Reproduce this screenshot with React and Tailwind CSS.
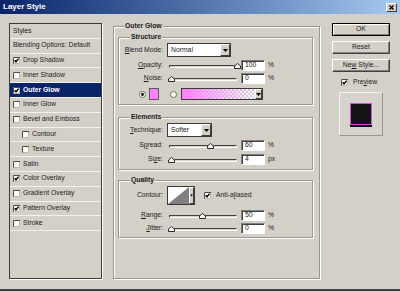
import React from "react";

function Check({ checked }) {
  return (
    <svg width="7" height="7" viewBox="0 0 7 7" className="shrink-0 block">
      <rect x="0" y="0" width="7" height="7" fill="#fff" />
      <path d="M0.5 7V0.5H7" stroke="#4a4a4a" fill="none" />
      <path d="M0.5 6.5H6.5V1" stroke="#b8b4ac" fill="none" />
      {checked && (
        <path d="M1.6 3.2L3 4.8L5.6 1.6" stroke="#000" strokeWidth="1.4" fill="none" />
      )}
    </svg>
  );
}

function Radio({ on }) {
  return (
    <svg width="7" height="7" viewBox="0 0 7 7" className="shrink-0 block">
      <circle cx="3.5" cy="3.5" r="3" fill="#fff" stroke="#6a6a6a" strokeWidth="1" />
      {on && <circle cx="3.5" cy="3.5" r="1.4" fill="#000" />}
    </svg>
  );
}

function Arrow() {
  return (
    <div className="flex items-center justify-center bg-[#d4d0c8] border border-t-white border-l-white border-r-[#404040] border-b-[#404040] h-full">
      <svg width="5" height="3" viewBox="0 0 5 3" className="block">
        <path d="M0 0H5L2.5 3Z" fill="#000" />
      </svg>
    </div>
  );
}

function Dropdown({ text, w }) {
  return (
    <div className={"flex h-[14px] bg-white border border-[#3a3a3a] " + w}>
      <div className="flex-1 flex items-center pl-[3px]">{text}</div>
      <div className="w-[10px]">
        <Arrow />
      </div>
    </div>
  );
}

function Slider({ v }) {
  return (
    <div className="relative w-[71px] h-[12px] shrink-0">
      <div className="absolute left-[2px] right-[1px] top-[6px] h-[3px] bg-[#d4d0c8] border border-t-[#404040] border-l-[#404040] border-b-white border-r-white" />
      <svg
        width="7"
        height="6"
        viewBox="0 0 7 6"
        className="absolute top-[4px] block"
        style={{ left: 0.5 + v * 0.66 + "px" }}
      >
        <path d="M0.5 5.5V3L3.5 0.5L6.5 3V5.5Z" fill="#f4f3f0" stroke="#2a2a2a" strokeWidth="1" />
      </svg>
    </div>
  );
}

function Input({ value }) {
  return (
    <div className="w-[24px] h-[11px] shrink-0 bg-white border border-t-[#808080] border-l-[#808080] border-b-white border-r-white shadow-[inset_1px_1px_0_#404040] pl-[3px] flex items-center">
      {value}
    </div>
  );
}

function SliderRow({ label, v, value, unit, mt }) {
  return (
    <div className={"flex items-center h-[12px] " + mt}>
      <div className="w-[44px] text-right shrink-0">{label}</div>
      <div className="ml-[4px]">
        <Slider v={v} />
      </div>
      <div className="ml-[3px]">
        <Input value={value} />
      </div>
      <span className="ml-[3px]">{unit}</span>
    </div>
  );
}

function GroupTitle({ children, ml }) {
  return (
    <div className={"-mt-[5px] h-[9px] flex items-center font-bold bg-[#d4d0c8] px-[1px] w-fit " + ml}>
      {children}
    </div>
  );
}

const etched =
  "border border-[#9a968e] shadow-[1px_1px_0_#ffffff,inset_1px_1px_0_#ffffff]";

function Button({ children, def, mt }) {
  return (
    <div
      className={
        "h-[13px] flex items-center justify-center bg-[#d4d0c8] " +
        (def
          ? "border border-black shadow-[inset_1px_1px_0_#ffffff,inset_-1px_-1px_0_#808080] "
          : "border border-t-white border-l-white border-r-[#404040] border-b-[#404040] shadow-[inset_-1px_-1px_0_#808080] ") +
        mt
      }
    >
      {children}
    </div>
  );
}

const items = [
  { t: "Styles", kind: "plain" },
  { t: "Blending Options: Default", kind: "plain" },
  { t: "Drop Shadow", c: true },
  { t: "Inner Shadow", c: false },
  { t: "Outer Glow", c: true, sel: true },
  { t: "Inner Glow", c: false },
  { t: "Bevel and Emboss", c: false },
  { t: "Contour", c: false, ind: true },
  { t: "Texture", c: false, ind: true },
  { t: "Satin", c: false },
  { t: "Color Overlay", c: true },
  { t: "Gradient Overlay", c: false },
  { t: "Pattern Overlay", c: true },
  { t: "Stroke", c: false },
];

export default function App() {
  return (
    <div className="w-[400px] h-[291px] bg-[#d4d0c8] flex flex-col border-b-2 border-[#404040] font-['Liberation_Sans',Arial,sans-serif] text-[6.8px] leading-none text-[#1a1a1a] overflow-hidden">
      {/* Title bar */}
      <div className="h-[14px] shrink-0 flex items-center pl-[3px] pr-[3px] bg-linear-to-r from-[#0a246a] to-[#a6caf0]">
        <span className="text-white font-bold text-[8px]">Layer Style</span>
        <div className="ml-auto w-[11px] h-[9px] bg-[#d4d0c8] border border-t-white border-l-white border-r-[#404040] border-b-[#404040] flex items-center justify-center">
          <svg width="5" height="5" viewBox="0 0 5 5" className="block">
            <path d="M0.5 0.5L4.5 4.5M4.5 0.5L0.5 4.5" stroke="#000" strokeWidth="1.2" />
          </svg>
        </div>
      </div>

      {/* Body */}
      <div className="flex pl-[9px] pt-[9px]">
        {/* Left list */}
        <div className="w-[93px] h-[256px] shrink-0 border border-[#3c3c3c] shadow-[1px_1px_0_#ffffff] flex flex-col">
          {items.map((it, i) => (
            <div
              key={i}
              className={
                "h-[14.8px] shrink-0 flex items-center border-b border-[#f2f1ed] " +
                (it.sel ? "bg-[#0a246a] text-white font-bold " : "") +
                (it.kind === "plain" ? "pl-[3px]" : it.ind ? "pl-[12px]" : "pl-[3px]")
              }
            >
              {it.kind !== "plain" && <Check checked={it.c} />}
              <span className={it.kind === "plain" ? "" : "ml-[3px]"}>{it.t}</span>
            </div>
          ))}
        </div>

        {/* Outer Glow group */}
        <div className={"ml-[11px] mt-[3px] w-[207px] h-[253px] shrink-0 flex flex-col " + etched}>
          <GroupTitle ml="ml-[10px]">Outer Glow</GroupTitle>

          {/* Structure */}
          <div className={"ml-[4px] mt-[6px] w-[195px] h-[68px] shrink-0 flex flex-col " + etched}>
            <GroupTitle ml="ml-[11px]">Structure</GroupTitle>
            <div className="flex items-center h-[14px] mt-[1px]">
              <div className="w-[44px] text-right shrink-0">
                <u>B</u>lend Mode:
              </div>
              <div className="ml-[4px]">
                <Dropdown text="Normal" w="w-[64px]" />
              </div>
            </div>
            <SliderRow
              mt="mt-[2px]"
              label={<><u>O</u>pacity:</>}
              v={100}
              value="100"
              unit="%"
            />
            <SliderRow
              mt="mt-[1px]"
              label={<><u>N</u>oise:</>}
              v={0}
              value="0"
              unit="%"
            />
            <div className="flex items-center h-[12px] mt-[4px]">
              <div className="ml-[20px]">
                <Radio on />
              </div>
              <div className="ml-[3px] w-[10px] h-[12px] bg-[#ff80ff] border border-[#5a5a5a]" />
              <div className="ml-[11px]">
                <Radio />
              </div>
              <div className="ml-[4px] flex h-[12px] border border-[#3a3a3a]">
                <div className="w-[73px] h-full [background-image:linear-gradient(to_right,#ff80ff,#ff80ff00),repeating-conic-gradient(#d0d0d0_0_25%,#ffffff_0_50%)] [background-size:100%_100%,4px_4px]" />
                <div className="w-[7px]">
                  <Arrow />
                </div>
              </div>
            </div>
          </div>

          {/* Elements */}
          <div className={"ml-[4px] mt-[12px] w-[195px] h-[53px] shrink-0 flex flex-col " + etched}>
            <GroupTitle ml="ml-[11px]">Elements</GroupTitle>
            <div className="flex items-center h-[14px] mt-[1px]">
              <div className="w-[44px] text-right shrink-0">
                <u>T</u>echnique:
              </div>
              <div className="ml-[4px]">
                <Dropdown text="Softer" w="w-[45px]" />
              </div>
            </div>
            <SliderRow
              mt="mt-[2px]"
              label={<>S<u>p</u>read:</>}
              v={60}
              value="60"
              unit="%"
            />
            <SliderRow
              mt="mt-[2px]"
              label={<>Si<u>z</u>e:</>}
              v={0}
              value="4"
              unit="px"
            />
          </div>

          {/* Quality */}
          <div className={"ml-[4px] mt-[10px] w-[195px] h-[58px] shrink-0 flex flex-col " + etched}>
            <GroupTitle ml="ml-[11px]">Quality</GroupTitle>
            <div className="flex items-center h-[19px] mt-[1px]">
              <div className="w-[44px] text-right shrink-0">Contour:</div>
              <div className="ml-[4px] flex h-[19px] border border-[#3a3a3a]">
                <svg width="21" height="17" viewBox="0 0 21 17" className="block">
                  <rect width="21" height="17" fill="#ffffff" />
                  <path d="M0 17L21 0V17Z" fill="#808080" />
                </svg>
                <div className="w-[5px]">
                  <Arrow />
                </div>
              </div>
              <div className="ml-[9px]">
                <Check checked />
              </div>
              <span className="ml-[5px]">
                Anti-a<u>l</u>iased
              </span>
            </div>
            <SliderRow
              mt="mt-[4px]"
              label={<><u>R</u>ange:</>}
              v={47}
              value="50"
              unit="%"
            />
            <SliderRow
              mt="mt-[1px]"
              label={<><u>J</u>itter:</>}
              v={0}
              value="0"
              unit="%"
            />
          </div>
        </div>

        {/* Buttons column */}
        <div className="ml-[12px] w-[58px] shrink-0 flex flex-col">
          <Button def mt="">OK</Button>
          <Button mt="mt-[5px]">Reset</Button>
          <Button mt="mt-[5px]">
            Ne<u>w</u>&nbsp;Style...
          </Button>
          <div className="flex items-center h-[10px] mt-[5px]">
            <div className="ml-[9px]">
              <Check checked />
            </div>
            <span className="ml-[5px]">
              Pre<u>v</u>iew
            </span>
          </div>
          <div className="ml-[7px] mt-[5px] w-[44px] h-[44px] flex items-center justify-center border border-t-[#f4f3f0] border-l-[#f4f3f0] border-r-[#9a968e] border-b-[#9a968e] bg-[#d6d3cc]">
            <div className="w-[22px] h-[22px] bg-[#141414] border border-[#d64fd6] shadow-[0_2px_0_#0a0a0a]" />
          </div>
        </div>
      </div>
    </div>
  );
}
